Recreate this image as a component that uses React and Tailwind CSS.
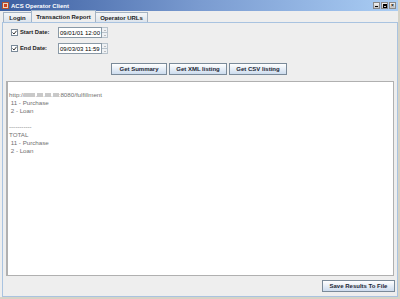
import React from 'react';

const font = { fontFamily: '"Liberation Sans", Arial, sans-serif' };

const Check = () => (
  <div className="w-[7px] h-[7px] border border-[#7a8a99] bg-white flex items-center justify-center">
    <svg width="5" height="5" viewBox="0 0 5 5">
      <path d="M0.5 2.5 L2 4 L4.5 0.8" stroke="#333" strokeWidth="1" fill="none" />
    </svg>
  </div>
);

const Spinner = ({ value }) => (
  <div className="flex h-[11px]">
    <div className="w-[44px] h-full border border-[#8a99a6] bg-white flex items-center pl-[1px] text-[6px] text-black leading-none">
      {value}
    </div>
    <div className="w-[6px] h-full flex flex-col border-y border-r border-[#b8c3cc]">
      <div className="flex-1 bg-[#eef1f4] border-b border-[#b8c3cc] flex items-center justify-center">
        <div className="w-0 h-0 border-x-[1.5px] border-x-transparent border-b-[1.5px] border-b-[#888]" />
      </div>
      <div className="flex-1 bg-[#eef1f4] flex items-center justify-center">
        <div className="w-0 h-0 border-x-[1.5px] border-x-transparent border-t-[1.5px] border-t-[#888]" />
      </div>
    </div>
  </div>
);

const DateRow = ({ label, value }) => (
  <div className="flex items-center h-[11px]">
    <div className="w-[8px]" />
    <Check />
    <span className="ml-[2px] w-[38px] text-[5.8px] font-bold text-[#222] leading-none">{label}</span>
    <Spinner value={value} />
  </div>
);

const Btn = ({ children, w }) => (
  <div
    className={`${w} h-[12px] border border-[#7a8a99] bg-gradient-to-b from-white to-[#cddcee] flex items-center justify-center text-[6px] font-bold text-[#1c2633] leading-none`}
  >
    {children}
  </div>
);

const Blk = ({ w }) => <span className={`inline-block ${w} h-[4px] bg-[#c9c9c9] align-middle`} />;

const Tab = ({ children, sel, w }) => (
  <div
    className={`${w} ${
      sel
        ? 'h-[12px] bg-[#eeeeee] border-[#9fb5cc] border-b-0'
        : 'h-[10px] bg-gradient-to-b from-[#f4f6f8] to-[#dde4ec] border-[#a5b3c2]'
    } border-t border-l border-r flex items-center justify-center text-[6px] font-bold text-[#222] leading-none -mr-[1px]`}
  >
    {children}
  </div>
);

export default function App() {
  const lines = [
    '',
    null,
    ' 11 - Purchase',
    ' 2 - Loan',
    '',
    '-----------',
    'TOTAL',
    ' 11 - Purchase',
    ' 2 - Loan',
  ];
  return (
    <div className="w-[400px] h-[299px] bg-[#d6d3c6] overflow-hidden" style={font}>
      <div className="w-[398px] h-[297px] flex flex-col bg-[#eeeeee]">
        {/* title bar */}
        <div className="h-[11px] flex items-center bg-gradient-to-r from-[#3c5ea0] via-[#7a9bd0] to-[#aacdf4] px-[2px]">
          <div className="w-[7px] h-[7px] bg-[#e8d8c0] border border-[#b05030] flex items-center justify-center">
            <div className="w-[3px] h-[3px] bg-[#d04020]" />
          </div>
          <span className="ml-[2px] text-[6px] font-bold text-white leading-none">ACS Operator Client</span>
          <div className="flex-1" />
          <div className="flex gap-[1px]">
            <div className="w-[7px] h-[7px] bg-gradient-to-b from-[#f2f2f2] to-[#c4c4c4] border border-[#8a8a8a] flex items-end justify-center pb-[1px]">
              <div className="w-[3px] h-[1px] bg-black" />
            </div>
            <div className="w-[7px] h-[7px] bg-gradient-to-b from-[#f2f2f2] to-[#c4c4c4] border border-[#8a8a8a] flex items-center justify-center">
              <div className="w-[4px] h-[4px] border border-black border-t-2" />
            </div>
            <div className="w-[7px] h-[7px] bg-gradient-to-b from-[#f2f2f2] to-[#c4c4c4] border border-[#8a8a8a] flex items-center justify-center text-[5px] font-bold leading-none text-black">
              ×
            </div>
          </div>
        </div>
        {/* body */}
        <div className="flex-1 flex flex-col pl-[2px]">
          {/* tabs */}
          <div className="h-[11px] flex items-end pl-[1px]">
            <Tab w="w-[29px]">Login</Tab>
            <Tab w="w-[65px]" sel>Transaction Report</Tab>
            <Tab w="w-[53px]">Operator URLs</Tab>
          </div>
          {/* panel */}
          <div className="flex-1 flex flex-col border-l border-r border-b border-t border-[#a9c3e0]">
            <div className="h-[4px]" />
            <DateRow label="Start Date:" value="09/01/01 12:00" />
            <div className="h-[5px]" />
            <DateRow label="End Date:" value="09/03/03 11:59" />
            <div className="h-[9px]" />
            <div className="flex pl-[108px] gap-[2px]">
              <Btn w="w-[56px]">Get Summary</Btn>
              <Btn w="w-[58px]">Get XML listing</Btn>
              <Btn w="w-[58px]">Get CSV listing</Btn>
            </div>
            <div className="h-[6px]" />
            <div className="mx-[3px] h-[195px] bg-white border border-[#b0b0b0] border-l-2 pl-[1px] pt-[1px] text-[6.2px] text-[#707070]">
              {lines.map((l, i) =>
                l === null ? (
                  <div key={i} className="h-[8px] leading-[8px] whitespace-pre">
                    http://<Blk w="w-[11px]" />.<Blk w="w-[6px]" />.<Blk w="w-[6px]" />.<Blk w="w-[6px]" />:8080/fulfillment
                  </div>
                ) : (
                  <div key={i} className="h-[8px] leading-[8px] whitespace-pre">
                    {l}
                  </div>
                )
              )}
            </div>
            <div className="flex-1 flex items-center justify-end pr-[2px]">
              <Btn w="w-[73px]">Save Results To File</Btn>
            </div>
          </div>
        </div>
      </div>
    </div>
  );
}
